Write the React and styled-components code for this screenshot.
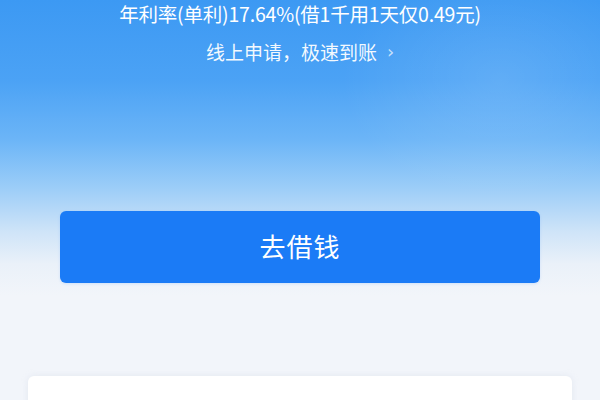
import React from "react";
import styled, { createGlobalStyle } from "styled-components";

const GlobalStyle = createGlobalStyle`
  html, body {
    margin: 0;
    padding: 0;
    background: #f2f5fa;
  }
  body {
    font-family: "Noto Sans CJK SC", "Noto Sans", sans-serif;
  }
`;

const Page = styled.div`
  width: 600px;
  height: 400px;
  overflow: hidden;
  position: relative;
  background: linear-gradient(
    180deg,
    #3c99f3 0%,
    #4ba2f5 20%,
    #6cb5f7 35%,
    #9ccdf8 47%,
    #cfe4f8 58%,
    #eaf1f9 66%,
    #f2f5fa 74%,
    #f2f5fa 100%
  );
  display: flex;
  flex-direction: column;
  align-items: center;
`;

const Glow = styled.div`
  position: absolute;
  right: -60px;
  top: -40px;
  width: 320px;
  height: 240px;
  border-radius: 50%;
  background: radial-gradient(ellipse at center, rgba(255, 255, 255, 0.12), rgba(255, 255, 255, 0) 70%);
  pointer-events: none;
`;

const Rate = styled.div`
  flex-shrink: 0;
  margin-top: 1px;
  font-size: 19.5px;
  line-height: 26px;
  color: #ffffff;
  letter-spacing: -0.2px;
  position: relative;
`;

const Link = styled.div`
  flex-shrink: 0;
  margin-top: 13px;
  font-size: 19px;
  line-height: 24px;
  color: rgba(255, 255, 255, 0.95);
  display: flex;
  align-items: center;
  gap: 10px;
  position: relative;
`;

const Chevron = styled.span`
  color: rgba(255, 255, 255, 0.7);
  font-size: 18px;
  font-family: "DejaVu Sans", sans-serif;
`;

const Button = styled.button`
  flex-shrink: 0;
  margin-top: 147px;
  width: 480px;
  height: 72px;
  padding: 0 0 4px;
  border: none;
  border-radius: 6px;
  background: #1b7bf6;
  color: #ffffff;
  font-family: "Noto Sans CJK SC", sans-serif;
  font-size: 26px;
  letter-spacing: 1px;
  box-shadow: 0 1px 3px rgba(27, 123, 246, 0.15);
`;

const Card = styled.div`
  flex-shrink: 0;
  margin-top: 93px;
  width: 544px;
  height: 80px;
  background: #ffffff;
  border-radius: 6px 6px 0 0;
  box-shadow: 0 0 6px rgba(200, 210, 225, 0.35);
`;

export default function App() {
  return (
    <>
      <GlobalStyle />
      <Page>
        <Glow />
        <Rate>年利率(单利)17.64%(借1千用1天仅0.49元)</Rate>
        <Link>
          线上申请，极速到账
          <Chevron>›</Chevron>
        </Link>
        <Button type="button">去借钱</Button>
        <Card />
      </Page>
    </>
  );
}
